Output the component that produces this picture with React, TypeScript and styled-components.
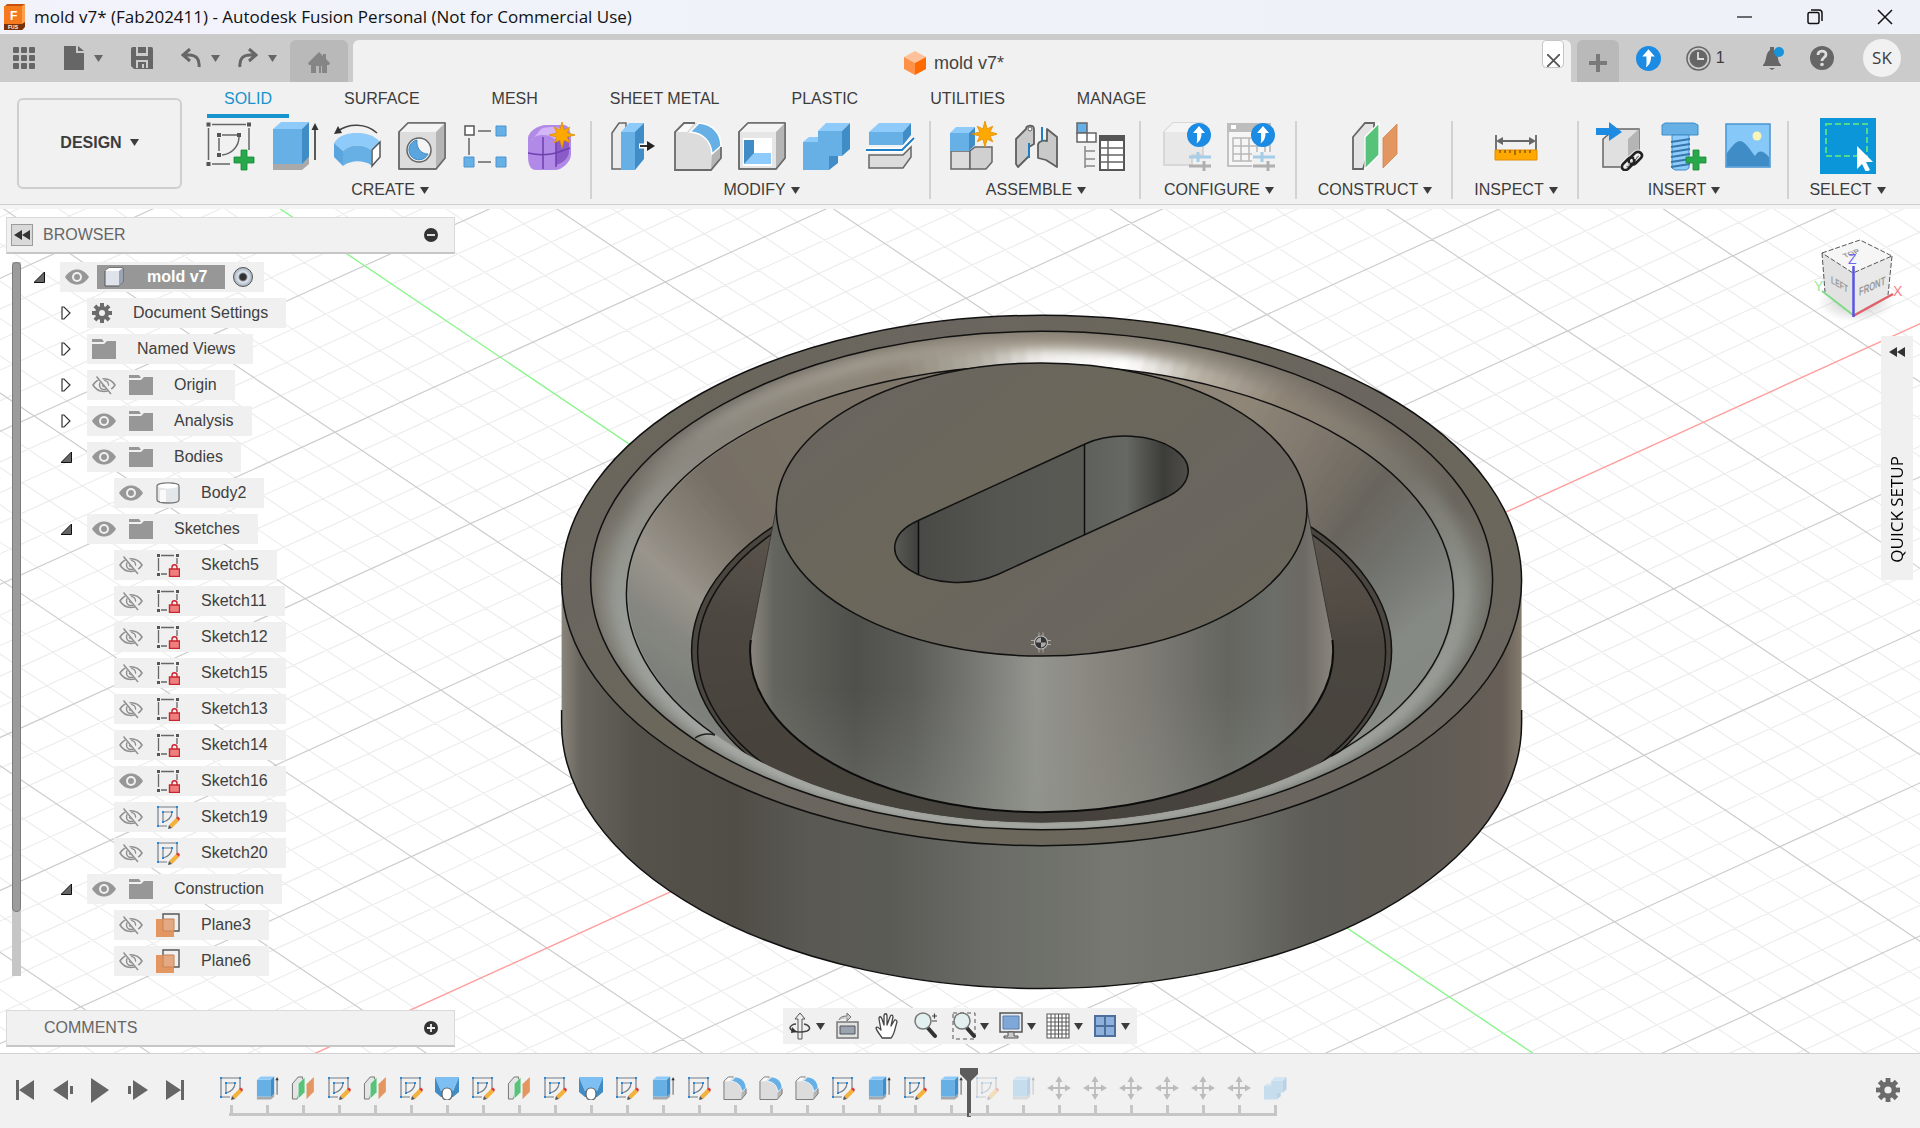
import React from "react";
import styled, { createGlobalStyle, css } from "styled-components";

const UI = '"Liberation Sans", Arial, sans-serif';
const SEGOE = '"Open Sans", "Noto Sans", sans-serif';

const Global = createGlobalStyle`
  *, *::before, *::after { box-sizing: border-box; }
  body { margin: 0; background: #f1f1f1; color: #3c3c3c; font-family: ${UI}; font-size: 16px; line-height: 20px; }
  button { font: inherit; color: inherit; border: 0; padding: 0; background: none; cursor: pointer; display: flex; align-items: center; }
  svg { display: block; flex: none; }
`;

/* ------------------------------------------------------------------ */
/* Layout                                                              */
/* ------------------------------------------------------------------ */

const Page = styled.div`
  display: flex;
  flex-direction: column;
  min-height: 100vh;
`;

const TitleBar = styled.header`
  display: flex;
  align-items: center;
  height: 34px;
  padding-left: 3px;
  background: linear-gradient(90deg, #f2f2fb, #eff3f9 40%, #eef2f8);
`;

const WindowTitle = styled.h1`
  margin: 0;
  padding-left: 9px;
  flex: 1;
  font: 400 17px/24px ${SEGOE};
  color: #111;
`;

const WindowButton = styled.button`
  width: 70px;
  height: 34px;
  justify-content: center;
`;

const TabStrip = styled.div`
  display: flex;
  height: 48px;
  padding-top: 6px;
  background: #cbcbcb;
`;

const QuickTools = styled.div`
  display: flex;
  align-items: center;
  width: 290px;
  padding: 0 0 6px 12px;
  gap: 28px;
  color: #666;
`;

const ToolCluster = styled.div<{ $gap?: number }>`
  display: flex;
  align-items: center;
  gap: ${(p) => p.$gap ?? 10}px;
`;

const SideTab = styled.button<{ $w: number }>`
  width: ${(p) => p.$w}px;
  height: 42px;
  justify-content: center;
  padding-top: 4px;
  border-radius: 6px 6px 0 0;
  background: #b9b9b9;
  color: #858585;
`;

const DocumentTab = styled.div`
  flex: 1;
  display: flex;
  align-items: center;
  justify-content: center;
  gap: 8px;
  position: relative;
  margin: 0 6px 0 5px;
  padding: 3px 16px 0 0;
  border-radius: 6px 6px 0 0;
  background: #f1f1f1;
  font-size: 18px;
  color: #444;
`;

const CloseTab = styled.button`
  position: absolute;
  right: 7px;
  top: 0;
  width: 22px;
  height: 28px;
  padding: 13px 0 0 4px;
  align-items: flex-start;
  border: 1px solid #c6c6c6;
  border-radius: 4px;
  background: #fff;
`;

const AccountTools = styled.div`
  display: flex;
  align-items: center;
  width: 301px;
  padding: 0 19px 6px 17px;
  justify-content: space-between;
`;

const Jobs = styled.button`
  gap: 5px;
  margin-right: 12px;
`;

const Avatar = styled.button`
  width: 38px;
  height: 38px;
  margin-left: 4px;
  justify-content: center;
  border-radius: 50%;
  background: #f1f1f1;
  font: 400 17px/20px ${SEGOE};
`;

const Ribbon = styled.div`
  display: flex;
  height: 127px;
  border-bottom: 4px solid #f4f4f4;
  box-shadow: inset 0 -1px 0 #cfcfcf;
`;

const WorkspaceButton = styled.button`
  width: 165px;
  height: 91px;
  margin: 16px 16px 0 17px;
  padding-bottom: 2px;
  justify-content: center;
  gap: 8px;
  border: 2px solid #cfcfcf;
  border-radius: 6px;
  font-weight: 700;
`;

const RibbonMain = styled.div`
  flex: 1;
  display: flex;
  flex-direction: column;
`;

const RibbonTabs = styled.nav`
  display: flex;
  gap: 38px;
  height: 36px;
  padding: 6px 0 0 9px;
`;

const RibbonTab = styled.button<{ $active?: boolean }>`
  height: 30px;
  padding: 0 17px 5px;
  border-bottom: 4px solid ${(p) => (p.$active ? "#1793cd" : "transparent")};
  color: ${(p) => (p.$active ? "#1793cd" : "#3c3c3c")};
`;

const Groups = styled.div`
  display: flex;
  flex: 1;
  padding-bottom: 4px;
`;

const Group = styled.section<{ $min: number; $end?: number }>`
  display: flex;
  flex-direction: column;
  align-items: center;
  min-width: ${(p) => p.$min}px;
  padding: 3px ${(p) => p.$end ?? 0}px 0 0;
  background: linear-gradient(#d2d2d2, #d2d2d2) right 3px / 2px 78px no-repeat;
  &:last-child {
    flex: 1;
    background: none;
  }
`;

const GroupTools = styled.div`
  display: flex;
  align-items: center;
  height: 50px;
  gap: 14px;
`;

const ToolButton = styled.button<{ $selected?: boolean }>`
  ${(p) =>
    p.$selected &&
    css`
      padding: 3px;
      background: #0a96d9;
    `}
`;

const GroupLabel = styled.button`
  height: 20px;
  margin-top: 9px;
  gap: 5px;
`;

const Canvas = styled.main`
  position: relative;
  flex: 1;
  display: flex;
  flex-direction: column;
  overflow: hidden;
  padding: 8px 6px 6px;
  background: #fff;
`;

const Scene = styled.svg`
  position: absolute;
  inset: 0;
  width: 100%;
  height: 100%;
`;

const PanelBar = styled.div<{ $indent: number }>`
  position: relative;
  display: flex;
  align-items: center;
  width: 449px;
  height: 37px;
  padding: 0 16px 0 ${(p) => p.$indent}px;
  gap: 10px;
  border: 1px solid #dadada;
  border-bottom: 2px solid #c6c6c6;
  background: #f1f1f1;
  color: #666;
`;

const PanelTitle = styled.h2`
  flex: 1;
  margin: 0;
  font: 400 16px/20px ${UI};
`;

const CollapseButton = styled.button`
  width: 22px;
  height: 22px;
  justify-content: center;
  border: 1px solid #9c9c9c;
  background: #d9d9d9;
`;

const TreeArea = styled.div`
  position: relative;
  display: flex;
  gap: 13px;
  margin: 8px 0 auto;
  padding-left: 6px;
`;

const ScrollTrack = styled.div`
  width: 9px;
  height: 714px;
  background: #c6c6c6;
`;

const ScrollThumb = styled.div`
  height: 91%;
  border: 1px solid #7c7c7c;
  border-radius: 4px;
  background: #9c9c9c;
`;

const Tree = styled.ul`
  display: flex;
  flex-direction: column;
  gap: 6px;
  margin: 0;
  padding: 0;
  list-style: none;
`;

const TreeRow = styled.li<{ $level: number }>`
  display: flex;
  align-items: center;
  height: 30px;
  padding-left: ${(p) => p.$level * 27}px;
`;

const Twisty = styled.button`
  width: 26px;
  height: 30px;
`;

const RowBody = styled.div<{ $wide?: boolean }>`
  display: flex;
  align-items: center;
  height: 30px;
  padding: 0 ${(p) => (p.$wide ? 11 : 18)}px 0 5px;
  gap: ${(p) => (p.$wide ? 8 : 13)}px;
  background: #f0f0f0;
  color: #404040;
`;

const RowName = styled.span`
  padding-left: 8px;
`;

const RootName = styled.span`
  display: flex;
  align-items: center;
  height: 24px;
  padding: 0 18px 0 7px;
  gap: 23px;
  background: #979797;
  color: #fff;
  font-weight: 700;
`;

const ActiveRadio = styled.input`
  appearance: none;
  width: 20px;
  height: 20px;
  margin: 0;
  border: 1px solid #555;
  border-radius: 50%;
  background: radial-gradient(circle, #333 0 3px, #dde5ee 5px, #a9b3bf 9px);
`;

const NavBar = styled.div`
  position: absolute;
  bottom: 9px;
  left: 50%;
  transform: translateX(-50%);
  display: flex;
  align-items: center;
  height: 36px;
  padding: 0 12px 0 5px;
  gap: 15px;
  background: #f0f0f0;
`;

const NavButton = styled.button<{ $menu?: boolean }>`
  gap: 4px;
  margin-right: ${(p) => (p.$menu ? -5 : 0)}px;
`;

const Cube = styled.svg`
  position: absolute;
  top: 25px;
  right: 14px;
`;

const QuickSetup = styled.button`
  position: absolute;
  top: 127px;
  right: 7px;
  width: 32px;
  height: 244px;
  padding: 11px 0 17px;
  flex-direction: column;
  justify-content: space-between;
  background: #f0f0f0;
  color: #000;
  font: 400 17px/20px ${SEGOE};
`;

const Vertical = styled.span`
  writing-mode: vertical-rl;
  transform: rotate(180deg);
`;

const TimelineBar = styled.footer`
  display: flex;
  height: 75px;
  padding: 14px 20px 11px 16px;
  border-top: 1px solid #d2d2d2;
  color: #666;
`;

const Playback = styled.div`
  display: flex;
  align-items: center;
  width: 168px;
  height: 44px;
  justify-content: space-between;
`;

const Timeline = styled.ol`
  position: relative;
  display: flex;
  flex: 1;
  margin: 0 0 0 29px;
  padding: 0;
  list-style: none;
`;

const Feature = styled.li<{ $edge?: "first" | "last"; $dim?: boolean }>`
  position: relative;
  display: flex;
  flex-direction: column;
  align-items: center;
  width: 36px;
  padding-top: 8px;
  > button {
    opacity: ${(p) => (p.$dim ? 0.3 : 1)};
  }
  &::after {
    content: "";
    width: 3px;
    height: 9px;
    margin-top: 5px;
    background: #c6c6c6;
  }
  &::before {
    content: "";
    position: absolute;
    top: 45px;
    height: 3px;
    left: ${(p) => (p.$edge === "first" ? 16 : 0)}px;
    right: ${(p) => (p.$edge === "last" ? 16 : 0)}px;
    background: #c6c6c6;
  }
`;

const Marker = styled.li`
  position: relative;
  width: 0;
  > svg {
    position: absolute;
    left: -9px;
    top: 0;
  }
`;

const TimelineSettings = styled.button`
  height: 44px;
`;

/* ------------------------------------------------------------------ */
/* Icons                                                               */
/* ------------------------------------------------------------------ */

type IconProps = { size?: number };

const Icon = ({ size = 50, box = 50, children }: { size?: number; box?: number; children: React.ReactNode }) => (
  <svg width={size} height={size} viewBox={`0 0 ${box} ${box}`} aria-hidden="true">
    {children}
  </svg>
);

const Caret = ({ w = 9 }: { w?: number }) => (
  <svg width={w} height={7} viewBox="0 0 9 7" preserveAspectRatio="none" aria-hidden="true">
    <path d="M0 0h9L4.500 7z" fill="currentColor" />
  </svg>
);

const starPoints = (cx: number, cy: number, outer: number, inner: number) =>
  Array.from({ length: 16 }, (_, i) => {
    const r = i % 2 ? inner : i % 4 ? outer * 0.85 : outer;
    const a = (i * Math.PI) / 8;
    return `${(cx + r * Math.sin(a)).toFixed(1)},${(cy - r * Math.cos(a)).toFixed(1)}`;
  }).join(" ");

const Star = ({ x, y }: { x: number; y: number }) => (
  <polygon points={starPoints(x, y, 13, 5.5)} fill="#ffa800" stroke="#e08e00" strokeWidth="0.8" />
);

const Plus = ({ x, y, r = 10 }: { x: number; y: number; r?: number }) => (
  <path
    d={`M${x - 3} ${y - r}h6v${r - 3}h${r - 3}v6h${3 - r}v${r - 3}h-6v${3 - r}h${3 - r}v-6h${r - 3}z`}
    fill="#27a84a"
    stroke="#168a38"
    strokeWidth="0.8"
  />
);

const UpBadge = ({ x, y, r = 12 }: { x: number; y: number; r?: number }) => (
  <g transform={`translate(${x} ${y}) scale(${r / 12})`}>
    <circle r="12" fill="#1b8be3" />
    <path d="M0-9 6-2H2.500C2.500 3 1 6-2.500 8.500-1.500 5-2 2-2-2h-4z" fill="#fff" />
  </g>
);

const SketchCreate = () => (
  <Icon>
    <path d="M7 3.500h34M3.500 7v32M44 7v22M7 43h18" stroke="#666" strokeWidth="1.500" fill="none" />
    <path d="M17 14h15M14 17v13M34 16c0 9-7 17-17 18" stroke="#666" strokeWidth="1.500" fill="none" />
    <path d="M1.500 1.500h4v4h-4zM42 1.500h4v4h-4zM1.500 41h4v4h-4zM12 12h4v4h-4zM32 12h4v4h-4zM12 32h4v4h-4z" fill="#555" />
    <Plus x={39} y={39} />
  </Icon>
);

const Extrude = ({ size }: IconProps) => (
  <Icon size={size}>
    <path d="M4 43h28l8-7v7l-7 6H4z" fill="#a9a9a9" />
    <path d="M4 8h29v35H4z" fill="#67b0e6" />
    <path d="M4 8l8-7h28l-7 7z" fill="#8fcbfa" />
    <path d="M33 8l7-7v35l-7 7z" fill="#3f8cc6" />
    <path d="M46 6v33" stroke="#333" strokeWidth="1.600" />
    <path d="M46 2l3.500 7h-7z" fill="#333" />
  </Icon>
);

const Revolve = () => (
  <Icon>
    <path d="M1 22C6 14 15 12 24 12s17 2 23 9l-9 8c-8-6-20-6-28 1z" fill="#8fcbfa" />
    <path d="M10 30c8-7 20-7 28-1v15c-8-5-20-5-28 1z" fill="#67b0e6" />
    <path d="M1 22l9 8v15l-9-9z" fill="#5aa5de" />
    <path d="M39 29l8-8v15l-8 9z" fill="#fff" stroke="#555" strokeWidth="1.500" />
    <path d="M5 10C16 2 33 2 44 12" stroke="#444" strokeWidth="1.600" fill="none" />
    <path d="M1 13l4-8 4 7z" fill="#333" />
  </Icon>
);

const GreyBox = ({ front = "#dcdcdc" }: { front?: string }) => (
  <g stroke="#6b6b6b" strokeWidth="1.500" strokeLinejoin="round">
    <path d="M2 11 11 2h37v35l-9 11H2z" fill={front} />
    <path d="M2 11 11 2h37l-9 9z" fill="#f4f4f4" stroke="none" />
    <path d="M39 11l9-9v35l-9 11z" fill="#b5b5b5" stroke="none" />
    <path d="M2 11 11 2h37v35l-9 11H2z" fill="none" />
  </g>
);

const Hole = () => (
  <Icon>
    <GreyBox />
    <circle cx="22" cy="29" r="12" fill="#f4f4f4" stroke="#666" strokeWidth="1.500" />
    <path d="M20 19a10 10 0 1 0 11 14c-7 0-12-6-11-14z" fill="#5aa5de" stroke="#3f8cc6" />
  </Icon>
);

const Pattern = () => (
  <Icon>
    <path d="M17 10h13M8 17v17M17 41h13" stroke="#666" strokeWidth="1.500" />
    <path d="M4 5h9v9H4z" fill="#fff" stroke="#555" strokeWidth="1.500" />
    <path d="M35 5h10v10H35zM35 36h10v10H35zM3 36h10v10H3z" fill="#67b0e6" stroke="#4a94d0" />
  </Icon>
);

const Form = () => (
  <Icon>
    <path d="M3 17C3 11 13 4 21 4h18c5 0 7 8 7 14v15c0 8-9 16-16 16H11c-6 0-8-6-8-14z" fill="#b08ae6" />
    <path d="M6 20c3-8 20-8 25 0l10-8c-4-7-18-7-25-4z" fill="#d2b6f8" />
    <path d="M31 20v24c8-2 13-8 13-14V14z" fill="#8b5cc8" />
    <path d="M18 16v32M3 32c9 2 20 2 28 0l14-5M31 18v28" stroke="#6d3fb0" strokeWidth="1.500" fill="none" />
    <Star x={37} y={14} />
  </Icon>
);

const PressPull = () => (
  <Icon>
    <path d="M3 12 10 2h7v46H3z" fill="#ececec" stroke="#666" strokeWidth="1.500" />
    <path d="M12 11h14v38H12z" fill="#67b0e6" />
    <path d="M12 11l8-9h15l-8 9z" fill="#8fcbfa" />
    <path d="M26 11l9-9v36l-9 11z" fill="#3f8cc6" />
    <path d="M30 25h12" stroke="#fff" strokeWidth="5" />
    <path d="M31 25h8" stroke="#333" strokeWidth="2" />
    <path d="M38 20l8 5-8 5z" fill="#222" />
  </Icon>
);

const Fillet = ({ size }: IconProps) => (
  <Icon size={size}>
    <path d="M2 11 11 2h17c12 2 20 11 20 24v10L38 49H2z" fill="#dcdcdc" />
    <path d="M2 11 11 2h10l-7 9z" fill="#fafafa" />
    <path d="M39 33l9-9v12L38 49z" fill="#b5b5b5" />
    <path d="M17 11l9-9c13 1 22 10 22 23l-9 8c-1-13-9-21-22-22z" fill="#67b0e6" stroke="#fff" strokeWidth="1.500" />
    <path d="M22 2H11l-9 9v38h36l10-12V26" fill="none" stroke="#6b6b6b" strokeWidth="1.800" />
  </Icon>
);

const Shell = () => (
  <Icon>
    <GreyBox front="#e6e6e6" />
    <path d="M7 18h27v26H7z" fill="#fff" stroke="#fff" strokeWidth="2" />
    <path d="M7 19l10 8v9L7 43z" fill="#3f8cc6" />
    <path d="M7 19l10 0v13L7 43z" fill="#3f8cc6" />
    <path d="M7 43l10-11h17v11z" fill="#8fcbfa" />
  </Icon>
);

const Combine = ({ size }: IconProps) => (
  <Icon size={size}>
    <path d="M2 21h15V10h24v25H28v14H2z" fill="#67b0e6" />
    <path d="M2 21l6-5h9v5zM17 10l8-8h24l-8 8z" fill="#8fcbfa" />
    <path d="M41 10l8-8v26l-8 7zM28 35h9v7l-9 7z" fill="#3f8cc6" />
  </Icon>
);

const Split = () => (
  <Icon>
    <path d="M4 11h34v13H4z" fill="#67b0e6" />
    <path d="M4 11l10-9h32l-8 9z" fill="#8fcbfa" />
    <path d="M38 11l8-9v12l-8 10z" fill="#3f8cc6" />
    <path d="M4 34h34l8-8v10l-8 11H4z" fill="#dcdcdc" stroke="#666" strokeWidth="1.500" />
    <path d="M1 29h36l12-12" stroke="#fff" strokeWidth="5" fill="none" />
    <path d="M1 29h36l12-12" stroke="#1f7fc4" strokeWidth="2" fill="none" />
  </Icon>
);

const NewComponent = () => (
  <Icon>
    <path d="M4 30h19v18H4z" fill="#dcdcdc" stroke="#666" strokeWidth="1.500" />
    <path d="M23 30l5-4h17v15l-6 7H23z" fill="#d0d0d0" stroke="#666" strokeWidth="1.500" />
    <path d="M3 12h19v18H3z" fill="#67b0e6" />
    <path d="M3 12l6-6h19l-6 6z" fill="#8fcbfa" />
    <path d="M22 12l6-6v18l-6 6z" fill="#3f8cc6" />
    <Star x={38} y={13} />
  </Icon>
);

const Joint = () => (
  <Icon>
    <g fill="#c9c9c9" stroke="#5f5f5f" strokeWidth="1.800" strokeLinejoin="round">
      <path d="M5 18 15 8c0-4 8-5 8 0v15l-5 3v9L7 46l-2-3z" />
      <path d="M46 16 36 8v12c-5-1-9 1-9 4v13l8 2 11 7z" />
    </g>
    <path d="M18 22v15M31 6v14" stroke="#1f7fc4" strokeWidth="2" />
    <circle cx="19" cy="8" r="2" fill="#fff" stroke="#5f5f5f" />
  </Icon>
);

const Table = () => (
  <Icon>
    <path d="M2 2h10v10H2z" fill="#67b0e6" stroke="#666" strokeWidth="1.500" />
    <path d="M2 12h10v9H2zM12 12h9v9h-9z" fill="#fff" stroke="#666" strokeWidth="1.500" />
    <path d="M10 25v22M10 30h10M10 38h10M10 45h10" stroke="#888" strokeWidth="1.500" fill="none" />
    <path d="M25 15h24v34H25z" fill="#fff" stroke="#555" strokeWidth="2" />
    <path d="M24 14h26v6H24z" fill="#555" />
    <path d="M25 27h24M25 34h24M25 41h24M33 20v29" stroke="#666" strokeWidth="1.500" />
  </Icon>
);

const Sliders = () => (
  <g strokeWidth="3" fill="none">
    <path d="M27 36h22M36 31v10" stroke="#a5cde8" />
    <path d="M27 45h22M42 40v10" stroke="#b0b0b0" />
  </g>
);

const Configure = () => (
  <Icon>
    <path d="M2 11 11 2h30v32H30v10H2z" fill="#e8e8e8" stroke="#d0d0d0" strokeWidth="1.500" />
    <path d="M2 11 11 2h30l-8 9z" fill="#f4f4f4" />
    <Sliders />
    <UpBadge x={37} y={14} />
  </Icon>
);

const ConfigureTable = () => (
  <Icon>
    <path d="M2 3h42v42H2z" fill="#f6f6f6" stroke="#c2c2c2" strokeWidth="2" />
    <path d="M1 2h44v9H1z" fill="#bdbdbd" />
    <path d="M5 4h5v4H5z" fill="#fff" />
    <path d="M7 17h32v23H7zM7 25h32M7 33h32M15 17v23M23 17v23M31 17v23" stroke="#b8b8b8" strokeWidth="1.500" fill="none" />
    <path d="M26 31h24v19H26z" fill="#f1f1f1" />
    <Sliders />
    <UpBadge x={37} y={14} />
  </Icon>
);

const Planes = ({ size }: IconProps) => (
  <Icon size={size}>
    <path d="M3 16 15 2h9v10L13 48H3z" fill="#e4e4e4" stroke="#666" strokeWidth="1.800" />
    <path d="M15 16 29 2v32L15 48z" fill="#56c27a" stroke="#fff" strokeWidth="1.200" />
    <path d="M33 17 47 3v30L33 47z" fill="#e39660" stroke="#cf8450" strokeWidth="0.800" />
  </Icon>
);

const Measure = () => (
  <Icon>
    <path d="M5 14v16M45 14v16M9 20h32" stroke="#666" strokeWidth="1.800" />
    <path d="M5 20l7-4v8zM45 20l-7-4v8z" fill="#666" />
    <path d="M4 29h42v10H4z" fill="#ffa800" stroke="#e08e00" />
    <path d="M9 29v3M14 29v3M19 29v3M24 29v5M29 29v3M34 29v3M39 29v3" stroke="#6b4a00" strokeWidth="1.200" />
  </Icon>
);

const Derive = () => (
  <Icon>
    <path d="M8 18 20 8h24v26L34 46H8z" fill="#e0e0e0" stroke="#666" strokeWidth="1.500" />
    <path d="M33 18 44 8v26L33 46z" fill="#b5b5b5" />
    <path d="M1 7h13V1l13 10-13 9v-6H1z" fill="#1b8be3" />
    <g fill="none" strokeLinecap="round">
      <path d="M36 37l4-4c5-4 10 1 6 6l-5 5M38 36l-8 5c-5 5 1 11 6 7l5-5" stroke="#f1f1f1" strokeWidth="6" />
      <path d="M34 41c-1-2 0-3 1-4l5-5c4-3 9 1 6 5l-5 5c-1 1-3 2-5 1" stroke="#222" strokeWidth="2.600" />
      <path d="M38 37c-2-1-4 0-5 1l-5 5c-3 4 1 8 5 5l5-5c1-1 2-3 1-4" stroke="#222" strokeWidth="2.600" />
    </g>
  </Icon>
);

const Fastener = () => (
  <Icon>
    <path d="M3 4 6 2h29l4 2v10H3z" fill="#67b0e6" stroke="#3f8cc6" />
    <path d="M13 14h17v33l-3 2H16l-3-2z" fill="#8fcbfa" stroke="#3f8cc6" />
    <path d="M12 21l19-3M12 26l19-3M12 31l19-3M12 36l19-3M12 41l19-3M12 46l19-3" stroke="#3577ab" strokeWidth="1.800" />
    <Plus x={37} y={39} />
  </Icon>
);

const Decal = () => (
  <Icon>
    <path d="M3 3h44v43H3z" fill="#86c8f7" stroke="#4a94d0" strokeWidth="1.500" />
    <path d="M4 32c5-7 9-12 13-12 5 0 10 9 15 15 4-6 7-6 14 1v9H4z" fill="#3f8cc6" />
    <circle cx="34" cy="15" r="4.500" fill="#f9f5b8" />
  </Icon>
);

const Select = () => (
  <Icon>
    <path d="M3 3h41v32H3z" fill="none" stroke="#52d88b" strokeWidth="2" strokeDasharray="6 3" />
    <path d="M34 25v23l5-5 4 8 4-2-4-8h7z" fill="#fff" />
  </Icon>
);

const Sketch = ({ size = 24 }: IconProps) => (
  <Icon size={size} box={24}>
    <path d="M2 2h19v12M2 2v19h9" stroke="#767f88" strokeWidth="1.200" fill="none" />
    <path d="M7 7h9c0 5-4 9-9 10z" stroke="#767f88" strokeWidth="1.200" fill="none" />
    <path d="M1 1h2v2H1zM20 1h2v2h-2zM1 20h2v2H1zM6 6h2v2H6zM15 6h2v2h-2zM6 16h2v2H6z" fill="#2588d8" />
    <path d="M13 20l7-7 3 3-7 7z" fill="#f3b13d" />
    <path d="M20 13l2-1.500 2 2-1 2.500z" fill="#e23b30" />
    <path d="M13 20l3 3-4 1z" fill="#555" />
  </Icon>
);

const LockedSketch = () => (
  <Icon size={24} box={24}>
    <path d="M5 2.500h13M2.500 5v13M21 5v6M5 21h6" stroke="#666" strokeWidth="1.300" />
    <path d="M1 1h3v3H1zM20 1h3v3h-3zM1 20h3v3H1z" fill="#555" />
    <path d="M16 16v-2c0-3 5-3 5 0v2" stroke="#c9252d" strokeWidth="1.400" fill="none" />
    <path d="M13.500 16h10v7.500h-10z" fill="#ee7f7f" stroke="#c9252d" strokeWidth="1.400" />
  </Icon>
);

const Loft = () => (
  <Icon size={24} box={24}>
    <path d="M0 1h24l-6 14H6z" fill="#8fcbfa" />
    <path d="M0 1l6 14h12l6-14v15l-6 5H6l-6-5z" fill="#3f8cc6" />
    <path d="M0 1h24l-6 14H6z" fill="#7dbff2" />
    <path d="M12 12c3 0 5 2 5 6s-2 6-5 6-5-2-5-6 2-6 5-6z" fill="#fff" stroke="#666" strokeWidth="1.200" />
  </Icon>
);

const Move = () => (
  <Icon size={24} box={24}>
    <path d="M12 4v16M4 12h16" stroke="#444" strokeWidth="1.800" />
    <path d="M12 0l3.500 6h-7zM12 24l3.500-6h-7zM0 12l6-3.500v7zM24 12l-6-3.500v7z" fill="#444" />
  </Icon>
);

const Eye = () => (
  <Icon size={24} box={24}>
    <path d="M0 12C6 2 18 2 24 12 18 22 6 22 0 12z" fill="#979797" />
    <circle cx="12" cy="12" r="5" fill="#f0f0f0" />
    <circle cx="12" cy="12" r="3" fill="#979797" />
  </Icon>
);

const EyeOff = () => (
  <Icon size={24} box={24}>
    <g stroke="#909090" strokeWidth="1.500" fill="none">
      <path d="M1 12C6 3.500 18 3.500 23 12 18 20.500 6 20.500 1 12z" />
      <circle cx="12" cy="12" r="4.500" />
      <circle cx="12" cy="12" r="1.500" />
      <path d="M5.500 3 20 20" stroke="#f0f0f0" strokeWidth="4" />
      <path d="M4.500 3.500 19 21" />
    </g>
  </Icon>
);

const Folder = () => (
  <Icon size={24} box={24}>
    <path d="M0 2h10l2 3H0z" fill="#979797" />
    <path d="M0 7h12l3-3h9v18H0z" fill="#979797" />
  </Icon>
);

const Gear = ({ size = 20, color = "#6b6b6b" }: { size?: number; color?: string }) => (
  <Icon size={size} box={20}>
    <g fill={color}>
      {[0, 45, 90, 135].map((a) => (
        <rect key={a} x="8" y="0" width="4" height="20" transform={`rotate(${a} 10 10)`} />
      ))}
      <circle cx="10" cy="10" r="7" />
    </g>
    <circle cx="10" cy="10" r="3" fill="#f0f0f0" />
  </Icon>
);

const Body = () => (
  <Icon size={24} box={24}>
    <path d="M1 5C1 1 23 1 23 5v14c0 4-22 4-22 0z" fill="#e4e7ea" stroke="#777" strokeWidth="1.300" />
    <ellipse cx="12" cy="5" rx="10" ry="2.500" fill="#fff" />
    <path d="M4 9h6v12H4z" fill="#fafafa" />
  </Icon>
);

const PlaneItem = () => (
  <Icon size={24} box={24}>
    <path d="M7 6V1h16v17h-5" fill="none" stroke="#555" strokeWidth="1.400" />
    <path d="M0 6h18v18H0z" fill="#e39660" />
    <path d="M7 6h11v12H7z" fill="#e3a983" stroke="#c98050" />
  </Icon>
);

const RootBox = () => (
  <Icon size={20} box={20}>
    <path d="M1 4 5 1h14v14l-4 4H1z" fill="#dfe4ec" stroke="#555" />
    <path d="M1 4 5 1h14l-4 3z" fill="#fff" />
    <path d="M15 4l4-3v14l-4 4z" fill="#9aa4b3" />
  </Icon>
);

const Opened = () => (
  <Icon size={11} box={11}>
    <path d="M0 10.500 10.500 0v10.500z" fill="#666" stroke="#111" />
  </Icon>
);

const Closed = () => (
  <svg width="10" height="14" viewBox="0 0 10 14" aria-hidden="true">
    <path d="M1 1v12h2l6-6-6-6z" fill="#fff" stroke="#333" strokeWidth="1.200" />
  </svg>
);

const Rewind = () => (
  <svg width="16" height="10" viewBox="0 0 16 10" aria-hidden="true">
    <path d="M8 0v10L0 5zM16 0v10L8 5z" fill="#333" />
  </svg>
);

const RoundSign = ({ plus }: { plus?: boolean }) => (
  <Icon size={14} box={14}>
    <circle cx="7" cy="7" r="7" fill="#333" />
    <path d={plus ? "M3 7h8M7 3v8" : "M3 7h8"} stroke="#f1f1f1" strokeWidth="1.800" />
  </Icon>
);

/* ------------------------------------------------------------------ */
/* Model view                                                          */
/* ------------------------------------------------------------------ */

const ORIGIN = { x: 1042.5, y: 722.7 };
const U = { x: 135.6, y: 91.4 };
const V = { x: 165.2, y: -75.1 };
const REACH = 12;
const TILT = 0.5525;
const CX = 1041.6;

const gridLine = (i: number, along: typeof U, across: typeof U) => {
  const x = ORIGIN.x + (across.x * i) / 5;
  const y = ORIGIN.y + (across.y * i) / 5;
  return `M${(x - along.x * REACH).toFixed(1)} ${(y - along.y * REACH).toFixed(1)}L${(x + along.x * REACH).toFixed(1)} ${(y + along.y * REACH).toFixed(1)}`;
};

const steps = Array.from({ length: 101 }, (_, k) => k - 50);
const gridPath = (keep: (i: number) => boolean) =>
  steps
    .filter(keep)
    .map((i) => gridLine(i, U, V) + gridLine(i, V, U))
    .join("");
const MINOR = gridPath((i) => i % 5 !== 0);
const MAJOR = gridPath((i) => i % 5 === 0 && i !== 0);

type Stop = [number, string];
type Ring = { r: number; y: number };

const channels = (hex: string) => [1, 3, 5].map((k) => parseInt(hex.slice(k, k + 2), 16));
const mix = (a: number[], b: number[], t: number) => a.map((v, k) => v + (b[k] - v) * t);

const colourAt = (stops: Stop[], angle: number) => {
  const all: Stop[] = [...stops, [stops[0][0] + 360, stops[0][1]]];
  const k = Math.max(0, all.findIndex(([a]) => a > angle) - 1);
  const [a0, c0] = all[k];
  const [a1, c1] = all[k + 1];
  return mix(channels(c0), channels(c1), (angle - a0) / (a1 - a0));
};

const ringPoint = (ring: Ring, deg: number) => {
  const t = (deg * Math.PI) / 180;
  return `${(CX + ring.r * Math.cos(t)).toFixed(1)},${(ring.y + ring.r * TILT * Math.sin(t)).toFixed(1)}`;
};

/* A turned surface between two rings, shaded by angle and by depth. */
const Turned = ({ from, to, shades, bands }: { from: Ring; to: Ring; shades: Stop[][]; bands: number }) => {
  const at = (t: number): Ring => ({ r: from.r + (to.r - from.r) * t, y: from.y + (to.y - from.y) * t });
  const step = 2;
  const facets: React.ReactNode[] = [];
  for (let b = 0; b < bands; b++) {
    const depth = ((b + 0.5) / bands) * (shades.length - 1);
    const s = Math.min(Math.floor(depth), Math.max(0, shades.length - 2));
    for (let a = 0; a < 360; a += step) {
      const near = colourAt(shades[s], a + step / 2);
      const far = colourAt(shades[Math.min(s + 1, shades.length - 1)], a + step / 2);
      const fill = `rgb(${mix(near, far, depth - s).map(Math.round).join(",")})`;
      const p = at(b / bands);
      const q = at((b + 1) / bands);
      facets.push(
        <polygon
          key={`${b}-${a}`}
          points={[ringPoint(p, a), ringPoint(p, a + step), ringPoint(q, a + step), ringPoint(q, a)].join(" ")}
          fill={fill}
          stroke={fill}
          strokeWidth="1.500"
        />,
      );
    }
  }
  return <g filter="url(#soft)">{facets}</g>;
};

const RIM: Ring = { r: 480, y: 580.5 };
const LIP: Ring = { r: 451, y: 580.5 };
const LIP_EDGE: Ring = { r: 455, y: 580.5 };
const WALL_TOP: Ring = { r: 413.5, y: 594 };
const WALL_BOTTOM: Ring = { r: 350, y: 650.5 };
const FLOOR: Ring = { r: 344, y: 652 };
const CONE_TOP: Ring = { r: 265.3, y: 509.5 };

const LIP_OUTER: Stop[] = [[0, "#6b665e"], [45, "#6f6c65"], [90, "#7b7d77"], [150, "#6f6e68"], [180, "#726b62"], [225, "#6c675f"], [250, "#7d776d"], [270, "#827c71"], [290, "#7d766c"], [320, "#6c665d"]];
const LIP_MID: Stop[] = [[0, "#7a7b74"], [45, "#858983"], [90, "#a5a8a2"], [135, "#8d908a"], [180, "#84827a"], [200, "#77736b"], [225, "#959087"], [245, "#a09a90"], [270, "#9d9586"], [290, "#968f84"], [310, "#7c756b"], [340, "#6a655d"]];
const LIP_INNER: Stop[] = [[0, "#8f948d"], [45, "#a0a39d"], [90, "#a5a8a2"], [135, "#a5a8a3"], [180, "#969a94"], [215, "#8d8980"], [235, "#8b857a"], [250, "#8d8678"], [262, "#b5b0a6"], [270, "#f0efec"], [282, "#ffffff"], [292, "#b8b1a4"], [305, "#8f8577"], [330, "#77746c"]];
const WALL: Stop[] = [[0, "#868a84"], [20, "#858983"], [45, "#8b8f88"], [135, "#858781"], [160, "#7c807a"], [180, "#868781"], [193, "#9a958c"], [205, "#857f76"], [215, "#766f65"], [240, "#7a7266"], [270, "#857d70"], [300, "#8f8678"], [315, "#7c756b"], [327, "#69645d"], [342, "#747671"]];
const GROOVE: Stop[] = [[0, "#4a453f"], [90, "#45413c"], [150, "#47433c"], [190, "#4c4740"], [220, "#5a544d"], [320, "#5a544d"], [345, "#524c45"]];

const OUTER_SHADES: Stop[] = [[0, "#8a857b"], [2, "#68655e"], [8, "#55524c"], [18, "#504d47"], [26, "#5a5954"], [34, "#5b5b56"], [44, "#6a6b66"], [57, "#757770"], [69, "#70716b"], [78, "#5d5c57"], [87, "#5e5a54"], [94, "#635d56"], [98, "#675f57"], [100, "#857b6e"]];
const CONE_SHADES: Stop[] = [[0, "#8a867e"], [4, "#65655f"], [18, "#4f4f4b"], [28, "#5c5d58"], [38, "#757671"], [49, "#94958f"], [60, "#88857e"], [70, "#7b7973"], [82, "#64655f"], [90, "#6c6e69"], [95, "#6c6863"], [100, "#8a857d"]];

const Stops = ({ list }: { list: Stop[] }) => (
  <>
    {list.map(([at, colour]) => (
      <stop key={at} offset={`${at}%`} stopColor={colour} />
    ))}
  </>
);

const RingShape = ({ ring, ...rest }: { ring: Ring } & React.SVGProps<SVGEllipseElement>) => (
  <ellipse cx={CX} cy={ring.y} rx={ring.r} ry={ring.r * TILT} {...rest} />
);

const SLOT = "M917.700 520.700 1085 444A63 34.800 0 0 1 1165 498L997.700 574.500A63 34.800 0 0 1 917.700 520.700Z";
const CONE = "M776.500 507 750.800 640A291.500 161 0 1 0 1332.400 640L1306.700 507Z";

const ModelView = () => (
  <Scene viewBox="0 209 1920 844" preserveAspectRatio="xMidYMid slice" role="img" aria-label="Model view of mold v7">
    <defs>
      <filter id="soft" x="-5%" y="-5%" width="110%" height="110%" colorInterpolationFilters="sRGB">
        <feGaussianBlur stdDeviation="2" />
      </filter>
      <linearGradient id="outer">
        <Stops list={OUTER_SHADES} />
      </linearGradient>
      <linearGradient id="cone">
        <Stops list={CONE_SHADES} />
      </linearGradient>
      <linearGradient id="coneLow" x1="0" y1="0" x2="0" y2="1">
        <stop offset="60%" stopColor="#8b8f88" stopOpacity="0" />
        <stop offset="100%" stopColor="#8b8f88" stopOpacity="0.35" />
      </linearGradient>
      <linearGradient id="face" gradientUnits="userSpaceOnUse" x1="600" y1="400" x2="690" y2="520" spreadMethod="reflect">
        <stop offset="0%" stopColor="#6b675b" />
        <stop offset="100%" stopColor="#6a655e" />
      </linearGradient>
      <linearGradient id="slotLeft">
        <stop offset="0%" stopColor="#5f615c" />
        <stop offset="100%" stopColor="#3f3f3c" />
      </linearGradient>
      <linearGradient id="slotMid" x1="0" y1="0" x2="1" y2="0">
        <stop offset="0%" stopColor="#494946" />
        <stop offset="50%" stopColor="#555551" />
        <stop offset="100%" stopColor="#5a5a55" />
      </linearGradient>
      <linearGradient id="slotRight">
        <stop offset="0%" stopColor="#5e605b" />
        <stop offset="40%" stopColor="#666863" />
        <stop offset="75%" stopColor="#3c3c39" />
        <stop offset="100%" stopColor="#504f4b" />
      </linearGradient>
      <clipPath id="inLip">
        <RingShape ring={LIP} />
      </clipPath>
      <clipPath id="inWall">
        <RingShape ring={WALL_TOP} />
      </clipPath>
      <clipPath id="inFloor">
        <RingShape ring={FLOOR} />
      </clipPath>
      <clipPath id="inSlot">
        <path d={SLOT} />
      </clipPath>
    </defs>

    <path d={MINOR} stroke="#ededed" strokeWidth="1.200" />
    <path d={MAJOR} stroke="#cdcdcd" strokeWidth="1.200" />
    <path d={gridLine(0, V, U)} stroke="#ff9c9c" strokeWidth="1.400" />
    <path d={gridLine(0, U, V)} stroke="#8cf58c" strokeWidth="1.400" />

    <path d="M561.600 580.500V723.300A480 265.200 0 0 0 1521.600 723.300V580.500Z" fill="url(#outer)" />
    <path d="M561.600 710V723.300A480 265.200 0 0 0 1521.600 723.300V710" fill="none" stroke="#111" strokeWidth="1.500" />
    <RingShape ring={RIM} fill="url(#face)" stroke="#111" strokeWidth="1.500" />
    <g clipPath="url(#inLip)">
      <Turned from={LIP_EDGE} to={{ r: 408, y: 596 }} shades={[LIP_OUTER, LIP_MID, LIP_INNER, LIP_INNER]} bands={9} />
    </g>
    <RingShape ring={LIP} fill="none" stroke="#111" strokeWidth="1.500" />

    <g clipPath="url(#inWall)">
      <Turned from={{ r: 419, y: 592 }} to={{ r: 340, y: 652 }} shades={[WALL]} bands={1} />
      <RingShape ring={WALL_BOTTOM} fill="#4a453f" stroke="#111" strokeWidth="1.500" />
      <g clipPath="url(#inFloor)">
        <Turned from={{ r: 350, y: 652 }} to={{ r: 250, y: 652 }} shades={[GROOVE]} bands={1} />
      </g>
      <RingShape ring={FLOOR} fill="none" stroke="#111" strokeWidth="1.500" />
    </g>
    <path d="M715 735A413.500 228.500 0 1 1 1331 756" fill="none" stroke="#111" strokeWidth="1.500" />
    <path d="M695 738c6-4 12-5 20-3" fill="none" stroke="#222" strokeWidth="1.500" />

    <path d={CONE} fill="url(#cone)" />
    <path d={CONE} fill="url(#coneLow)" />
    <path d="M776.500 507 750.800 640M1306.700 507 1332.400 640" stroke="#3a3833" strokeWidth="1" />
    <path d="M750.800 640A291.500 161 0 1 0 1332.400 640" fill="none" stroke="#0c0c0c" strokeWidth="2" />
    <RingShape ring={CONE_TOP} fill="url(#face)" stroke="#111" strokeWidth="1.500" />

    <g clipPath="url(#inSlot)">
      <rect x="890" y="500" width="28" height="100" fill="url(#slotLeft)" />
      <rect x="918" y="430" width="166" height="160" fill="url(#slotMid)" />
      <rect x="1084" y="430" width="106" height="120" fill="url(#slotRight)" />
      <path d="M918.500 515v65M1084.500 440v100" stroke="#0c0c0c" strokeWidth="1.500" />
    </g>
    <path d={SLOT} fill="none" stroke="#111" strokeWidth="1.500" />

    <g transform="translate(1041 642.500)">
      <circle r="6.500" fill="#333" stroke="#bbb" strokeWidth="1.200" />
      <path d="M0 0V-5A5 5 0 0 0-5 0zM0 0V5A5 5 0 0 0 5 0z" fill="#aaa" />
      <path d="M-2-10v4M2-10v4M-2 10V6M2 10V6M-10-2h4M-10 2h4M10-2H6M10 2H6" stroke="#bbb" strokeWidth="0.800" />
    </g>
  </Scene>
);

const ViewCube = () => (
  <Cube width="100" height="92" viewBox="1806 232 100 92" role="img" aria-label="View cube">
    <defs>
      <radialGradient id="cubeShade">
        <stop offset="0%" stopColor="#999" stopOpacity="0.6" />
        <stop offset="100%" stopColor="#999" stopOpacity="0" />
      </radialGradient>
    </defs>
    <ellipse cx="1856" cy="300" rx="38" ry="20" fill="url(#cubeShade)" />
    <path d="M1822 251 1860 238 1892 254 1853 271z" fill="#f6f6f6" />
    <path d="M1822 251 1853 271V313L1825 290z" fill="#e2e2e2" />
    <path d="M1853 271 1892 254 1888 293 1853 313z" fill="#e9e9e9" />
    <path d="M1822 251 1860 238 1892 254 1853 271zM1822 251l3 39M1892 254l-4 39" fill="none" stroke="#555" strokeDasharray="5 2" />
    <g fontFamily={UI} fontWeight="700" fill="#999">
      <text fontSize="8" transform="matrix(0.850 0.500 0 1.300 1831 281)">LEFT</text>
      <text fontSize="9" transform="matrix(0.850 -0.380 0 1.300 1859 294)">FRONT</text>
      <text fontSize="9" transform="matrix(0.850 -0.300 0.500 0.600 1845 256)">TOP</text>
    </g>
    <path d="M1853 313 1822 289" stroke="#7edb86" strokeWidth="2" />
    <path d="M1853 314 1893 292" stroke="#e0606a" strokeWidth="2.500" />
    <path d="M1853.500 264v51" stroke="#5a55e0" strokeWidth="2.500" />
    <g fontFamily={UI} fontSize="14">
      <text x="1814" y="289" fill="#98e898">Y</text>
      <text x="1893" y="294" fill="#f08088">X</text>
      <text x="1848" y="262" fill="#6a66ee">Z</text>
    </g>
  </Cube>
);

/* ------------------------------------------------------------------ */
/* Data                                                                */
/* ------------------------------------------------------------------ */

const RIBBON_TABS = ["SOLID", "SURFACE", "MESH", "SHEET METAL", "PLASTIC", "UTILITIES", "MANAGE"];

const GROUPS: { name: string; min: number; end?: number; tools: [string, React.ReactNode][] }[] = [
  {
    name: "CREATE",
    min: 394,
    end: 10,
    tools: [
      ["Create Sketch", <SketchCreate />],
      ["Extrude", <Extrude />],
      ["Revolve", <Revolve />],
      ["Hole", <Hole />],
      ["Rectangular Pattern", <Pattern />],
      ["Create Form", <Form />],
    ],
  },
  {
    name: "MODIFY",
    min: 339,
    tools: [
      ["Press Pull", <PressPull />],
      ["Fillet", <Fillet />],
      ["Shell", <Shell />],
      ["Combine", <Combine />],
      ["Split Body", <Split />],
    ],
  },
  {
    name: "ASSEMBLE",
    min: 210,
    tools: [
      ["New Component", <NewComponent />],
      ["Joint", <Joint />],
      ["Bill of Materials", <Table />],
    ],
  },
  {
    name: "CONFIGURE",
    min: 156,
    tools: [
      ["Configure", <Configure />],
      ["Configuration Table", <ConfigureTable />],
    ],
  },
  { name: "CONSTRUCT", min: 156, tools: [["Offset Plane", <Planes />]] },
  { name: "INSPECT", min: 126, tools: [["Measure", <Measure />]] },
  {
    name: "INSERT",
    min: 210,
    tools: [
      ["Insert Derive", <Derive />],
      ["Insert Fastener", <Fastener />],
      ["Decal", <Decal />],
    ],
  },
  { name: "SELECT", min: 120, end: 14, tools: [["Select", <Select />]] },
];

type Node = { name: string; level: number; open?: boolean; eye?: "on" | "off"; icon: React.ReactNode };

const folder = (name: string, open: boolean, eye?: "on" | "off"): Node => ({ name, level: 1, open, eye, icon: <Folder /> });
const leaf = (name: string, eye: "on" | "off", icon: React.ReactNode): Node => ({ name, level: 2, eye, icon });

const NODES: Node[] = [
  { name: "Document Settings", level: 1, open: false, icon: <Gear /> },
  folder("Named Views", false),
  folder("Origin", false, "off"),
  folder("Analysis", false, "on"),
  folder("Bodies", true, "on"),
  leaf("Body2", "on", <Body />),
  folder("Sketches", true, "on"),
  ...[5, 11, 12, 15, 13, 14].map((n) => leaf(`Sketch${n}`, "off", <LockedSketch />)),
  leaf("Sketch16", "on", <LockedSketch />),
  leaf("Sketch19", "off", <Sketch />),
  leaf("Sketch20", "off", <Sketch />),
  folder("Construction", true, "on"),
  leaf("Plane3", "off", <PlaneItem />),
  leaf("Plane6", "off", <PlaneItem />),
];

const FEATURE_ICONS: Record<string, [string, React.ReactNode]> = {
  s: ["Sketch", <Sketch />],
  e: ["Extrude", <Extrude size={24} />],
  p: ["Plane", <Planes size={24} />],
  l: ["Loft", <Loft />],
  f: ["Fillet", <Fillet size={24} />],
  m: ["Move", <Move />],
  c: ["Combine", <Combine size={24} />],
};
const BUILT = "sepspslspslsesfffsese".split("");
const PENDING = "semmmmmmc".split("");

const PLAYBACK: [string, number, string][] = [
  ["Go to start", 18, "M0 2h3v20H0zM18 2v20L3 12z"],
  ["Step back", 20, "M15 2v20L0 12zM17 8h3v8h-3z"],
  ["Play", 18, "M0 0v25l18-13z"],
  ["Step forward", 20, "M5 2v20l15-10zM0 8h3v8H0z"],
  ["Go to end", 18, "M15 2h3v20h-3zM0 2v20l15-10z"],
];

/* ------------------------------------------------------------------ */
/* Parts                                                               */
/* ------------------------------------------------------------------ */

const WindowBar = () => (
  <TitleBar>
    <svg width="22" height="26" viewBox="0 0 22 26" aria-hidden="true">
      <path d="M1 3 4 0h18v22l-3 4H1z" fill="#c8500e" />
      <path d="M1 2h18v18H1z" fill="#f57a1d" />
      <path d="M19 2l3-2v19l-3 1z" fill="#ffa04e" />
      <path d="M1 20h18l3-2v5l-3 3H1z" fill="#7a3109" />
      <text x="7" y="16" fontFamily={UI} fontWeight="700" fontSize="12" fill="#fff">F</text>
      <text x="5" y="25" fontFamily={UI} fontWeight="700" fontSize="5" fill="#fff">FUS</text>
    </svg>
    <WindowTitle>mold v7* (Fab202411) - Autodesk Fusion Personal (Not for Commercial Use)</WindowTitle>
    <WindowButton aria-label="Minimize">
      <Icon size={16} box={16}><path d="M0 8h15" stroke="#111" strokeWidth="1.200" /></Icon>
    </WindowButton>
    <WindowButton aria-label="Restore">
      <Icon size={16} box={16}>
        <path d="M1 5q0-1.500 1.500-1.500h8q1.500 0 1.500 1.500v8q0 1.500-1.500 1.500h-8Q1 14.500 1 13z" fill="none" stroke="#111" strokeWidth="1.500" />
        <path d="M4 1h8q3 0 3 3v8" fill="none" stroke="#111" strokeWidth="1.500" />
      </Icon>
    </WindowButton>
    <WindowButton aria-label="Close">
      <Icon size={16} box={16}><path d="M1 1l14 14M15 1 1 15" stroke="#111" strokeWidth="1.500" /></Icon>
    </WindowButton>
  </TitleBar>
);

const DocumentBar = () => (
  <TabStrip>
    <QuickTools>
      <button aria-label="Data panel">
        <Icon size={24} box={24}>
          {[0, 1, 2].map((r) =>
            [0, 1, 2].map((c) => <rect key={`${r}${c}`} x={1 + c * 8} y={1 + r * 8} width="6" height="6" rx="1" fill="#666" />),
          )}
        </Icon>
      </button>
      <ToolCluster>
        <button aria-label="File">
          <svg width="20" height="24" viewBox="0 0 20 24" aria-hidden="true">
            <path d="M0 0h12v7h8v17H0zM14 0l6 5h-6z" fill="#666" />
          </svg>
        </button>
        <Caret />
      </ToolCluster>
      <button aria-label="Save">
        <Icon size={22} box={22}>
          <path d="M0 2Q0 0 2 0h18q2 0 2 2v20H3l-3-3z" fill="#666" />
          <path d="M5 0v9h12V0h-2v6H7V0zM5 21v-8h12v8h-2v-6H7v6zM11 17h2v4h-2z" fill="#cbcbcb" />
        </Icon>
      </button>
      <ToolCluster $gap={18}>
        <ToolCluster>
          <button aria-label="Undo">
            <svg width="20" height="20" viewBox="0 0 20 20" aria-hidden="true">
              <path d="M9 1 2 7l7 6M2 7h6c7 0 11 4 10 12" fill="none" stroke="#666" strokeWidth="3" />
            </svg>
          </button>
          <Caret />
        </ToolCluster>
        <ToolCluster>
          <button aria-label="Redo">
            <svg width="20" height="20" viewBox="0 0 20 20" aria-hidden="true">
              <path d="M11 1l7 6-7 6M18 7h-6C5 7 1 11 2 19" fill="none" stroke="#666" strokeWidth="3" />
            </svg>
          </button>
          <Caret />
        </ToolCluster>
      </ToolCluster>
    </QuickTools>
    <SideTab $w={58} aria-label="Home">
      <Icon size={22} box={22}>
        <path d="M11 0l4 4V2h3v5l4 4-1 2h-2v8h-5v-7h-1v7h-2v-7H8v7H3v-8H1l-1-2z" fill="currentColor" />
      </Icon>
    </SideTab>
    <DocumentTab>
      <svg width="22" height="24" viewBox="0 0 22 24" aria-hidden="true">
        <path d="M11 0l11 6-11 6L0 6z" fill="#ffc19a" />
        <path d="M0 6l11 6v12L0 18z" fill="#ff9248" />
        <path d="M22 6l-11 6v12l11-6z" fill="#ff6b00" />
      </svg>
      <span>mold v7*</span>
      <CloseTab aria-label="Close document">
        <Icon size={13} box={13}><path d="M0 0l13 13M13 0 0 13" stroke="#555" strokeWidth="1.800" /></Icon>
      </CloseTab>
    </DocumentTab>
    <SideTab $w={42} aria-label="New design">
      <Icon size={20} box={20}><path d="M10 1v18M1 10h18" stroke="#7a7a7a" strokeWidth="4" /></Icon>
    </SideTab>
    <AccountTools>
      <button aria-label="Update">
        <svg width="25" height="25" viewBox="0 0 25 25" aria-hidden="true"><UpBadge x={12.5} y={12.5} r={12.5} /></svg>
      </button>
      <Jobs>
        <Icon size={25} box={25}>
          <circle cx="12.500" cy="12.500" r="11.500" fill="none" stroke="#666" strokeWidth="1.500" />
          <circle cx="12.500" cy="12.500" r="9" fill="#666" />
          <path d="M12 6v7h6" fill="none" stroke="#ddd" strokeWidth="1.800" />
        </Icon>
        1
      </Jobs>
      <button aria-label="Notifications">
        <Icon size={24} box={24}>
          <path d="M2 19c4-3 2-12 7-15V1h4v3c5 3 3 12 7 15v1H2zM8 22h6l-3 2z" fill="#666" />
          <circle cx="18" cy="6" r="5" fill="#1793d9" />
        </Icon>
      </button>
      <button aria-label="Help">
        <Icon size={24} box={24}>
          <circle cx="12" cy="12" r="12" fill="#666" />
          <path d="M8 9c0-5 8-5 8-.500 0 3-4 3-4 6.500" fill="none" stroke="#ddd" strokeWidth="2.800" />
          <circle cx="12" cy="18.500" r="1.800" fill="#ddd" />
        </Icon>
      </button>
      <Avatar>SK</Avatar>
    </AccountTools>
  </TabStrip>
);

const Toolbar = () => (
  <Ribbon>
    <WorkspaceButton>
      DESIGN <Caret />
    </WorkspaceButton>
    <RibbonMain>
      <RibbonTabs>
        {RIBBON_TABS.map((name, i) => (
          <RibbonTab key={name} $active={i === 0}>
            {name}
          </RibbonTab>
        ))}
      </RibbonTabs>
      <Groups>
        {GROUPS.map((g) => (
          <Group key={g.name} $min={g.min} $end={g.end}>
            <GroupTools>
              {g.tools.map(([label, icon]) => (
                <ToolButton key={label} aria-label={label} $selected={label === "Select"}>
                  {icon}
                </ToolButton>
              ))}
            </GroupTools>
            <GroupLabel>
              {g.name} <Caret />
            </GroupLabel>
          </Group>
        ))}
      </Groups>
    </RibbonMain>
  </Ribbon>
);

const BrowserTree = () => (
  <TreeArea>
    <ScrollTrack>
      <ScrollThumb />
    </ScrollTrack>
    <Tree>
      <TreeRow $level={0}>
        <Twisty aria-label="Collapse mold v7"><Opened /></Twisty>
        <RowBody $wide>
          <button aria-label="Toggle visibility"><Eye /></button>
          <RootName><RootBox /> mold v7</RootName>
          <ActiveRadio type="radio" name="active" defaultChecked aria-label="Activate mold v7" />
        </RowBody>
      </TreeRow>
      {NODES.map((n) => (
        <TreeRow key={n.name} $level={n.level}>
          {n.level === 1 ? (
            <Twisty aria-label={`Toggle ${n.name}`}>{n.open ? <Opened /> : <Closed />}</Twisty>
          ) : (
            <Twisty as="span" />
          )}
          <RowBody>
            {n.eye && <button aria-label={`Visibility of ${n.name}`}>{n.eye === "on" ? <Eye /> : <EyeOff />}</button>}
            {n.icon}
            <RowName>{n.name}</RowName>
          </RowBody>
        </TreeRow>
      ))}
    </Tree>
  </TreeArea>
);

const Lens = () => (
  <>
    <path d="M14 15l8 9" stroke="#333" strokeWidth="4" strokeLinecap="round" />
    <circle cx="10" cy="9" r="8" fill="#e3f0f0" stroke="#777" strokeWidth="1.500" />
  </>
);

const NAV: { label: string; menu?: boolean; art: React.ReactNode }[] = [
  {
    label: "Orbit",
    menu: true,
    art: (
      <>
        <path d="M10 27V7H7l5-6 5 6h-3v20z" fill="#eee" stroke="#555" />
        <path d="M16 12c5 1 8 5 3 7-6 2-16 1-17-3 0-2 3-4 6-4" fill="none" stroke="#444" strokeWidth="1.500" />
        <path d="M9 20l-5-5-1 6z" fill="#333" />
      </>
    ),
  },
  {
    label: "Look At",
    art: (
      <>
        <path d="M2 10h21v16H2z" fill="#e2e2e2" stroke="#777" strokeWidth="1.500" />
        <path d="M5 14h15v8H5z" fill="#9aa3af" stroke="#555" />
        <path d="M4 8c1-3 4-4 8-4V1l4 4-4 4V6" fill="#ccc" stroke="#777" />
      </>
    ),
  },
  {
    label: "Pan",
    art: (
      <path
        d="M8 26c-2-4-5-6-6-10 1-2 3 0 5 2L5 7c0-3 2-3 3 0l2 6V4c0-3 3-3 3 0v9l3-8c1-3 3-2 3 0l-2 9 3-5c1-2 3-1 3 1-2 5-2 12-6 16z"
        fill="#fff"
        stroke="#444"
        strokeWidth="1.300"
        strokeLinejoin="round"
      />
    ),
  },
  {
    label: "Zoom",
    art: (
      <>
        <Lens />
        <path d="M19 4h5M21.500 1.500v5M19 9h5" stroke="#444" strokeWidth="1.200" />
      </>
    ),
  },
  {
    label: "Fit",
    menu: true,
    art: (
      <>
        <path d="M1 1h22v26H1z" fill="none" stroke="#555" strokeDasharray="4 3" />
        <Lens />
      </>
    ),
  },
  {
    label: "Display Settings",
    menu: true,
    art: (
      <>
        <path d="M1 1h22v19H1z" fill="#e8eaee" stroke="#555" strokeWidth="1.500" />
        <path d="M4 4h16v13H4z" fill="#7fa8d8" stroke="#5d7fa8" />
        <path d="M9 20h6v4h4v2H5v-2h4z" fill="#ccc" stroke="#555" />
      </>
    ),
  },
  {
    label: "Grid and Snaps",
    menu: true,
    art: (
      <path
        d="M1 2h22v24H1zM1 6h22M1 10h22M1 14h22M1 18h22M1 22h22M5 2v24M9 2v24M12.500 2v24M16 2v24M20 2v24"
        fill="#fff"
        stroke="#5c5c5c"
        strokeWidth="1.100"
      />
    ),
  },
  {
    label: "Viewports",
    menu: true,
    art: (
      <>
        <path d="M1 3h22v22H1z" fill="#4e6f9c" />
        <path d="M3 5h8v8H3zM13 5h8v8h-8zM3 15h8v8H3zM13 15h8v8h-8z" fill="#8db0dc" />
      </>
    ),
  },
];

const NavigationBar = () => (
  <NavBar>
    {NAV.map((n) => (
      <NavButton key={n.label} aria-label={n.label} $menu={n.menu}>
        <svg width="24" height="28" viewBox="0 0 24 28" aria-hidden="true">{n.art}</svg>
        {n.menu && <Caret />}
      </NavButton>
    ))}
  </NavBar>
);

const History = () => (
  <TimelineBar>
    <Playback>
      {PLAYBACK.map(([label, w, d]) => (
        <button key={label} aria-label={label}>
          <svg width={w} height="25" viewBox={`0 0 ${w} 25`} aria-hidden="true"><path d={d} fill="currentColor" /></svg>
        </button>
      ))}
    </Playback>
    <Timeline>
      {BUILT.map((k, i) => (
        <Feature key={i} $edge={i === 0 ? "first" : undefined}>
          <button aria-label={FEATURE_ICONS[k][0]}>{FEATURE_ICONS[k][1]}</button>
        </Feature>
      ))}
      <Marker>
        <svg width="18" height="49" viewBox="0 0 18 49" aria-hidden="true">
          <path d="M0 0h18v6l-7 7v36H7V13L0 6z" fill="#5c5c5c" />
        </svg>
      </Marker>
      {PENDING.map((k, i) => (
        <Feature key={i} $dim $edge={i === PENDING.length - 1 ? "last" : undefined}>
          <button aria-label={FEATURE_ICONS[k][0]}>{FEATURE_ICONS[k][1]}</button>
        </Feature>
      ))}
    </Timeline>
    <TimelineSettings aria-label="Timeline settings"><Gear size={24} /></TimelineSettings>
  </TimelineBar>
);

export default function App() {
  return (
    <Page>
      <Global />
      <WindowBar />
      <DocumentBar />
      <Toolbar />
      <Canvas>
        <ModelView />
        <PanelBar $indent={4}>
          <CollapseButton aria-label="Collapse browser"><Rewind /></CollapseButton>
          <PanelTitle>BROWSER</PanelTitle>
          <button aria-label="Hide browser"><RoundSign /></button>
        </PanelBar>
        <BrowserTree />
        <PanelBar $indent={37}>
          <PanelTitle>COMMENTS</PanelTitle>
          <button aria-label="Add comment"><RoundSign plus /></button>
        </PanelBar>
        <NavigationBar />
        <ViewCube />
        <QuickSetup>
          <Rewind />
          <Vertical>QUICK SETUP</Vertical>
        </QuickSetup>
      </Canvas>
      <History />
    </Page>
  );
}
